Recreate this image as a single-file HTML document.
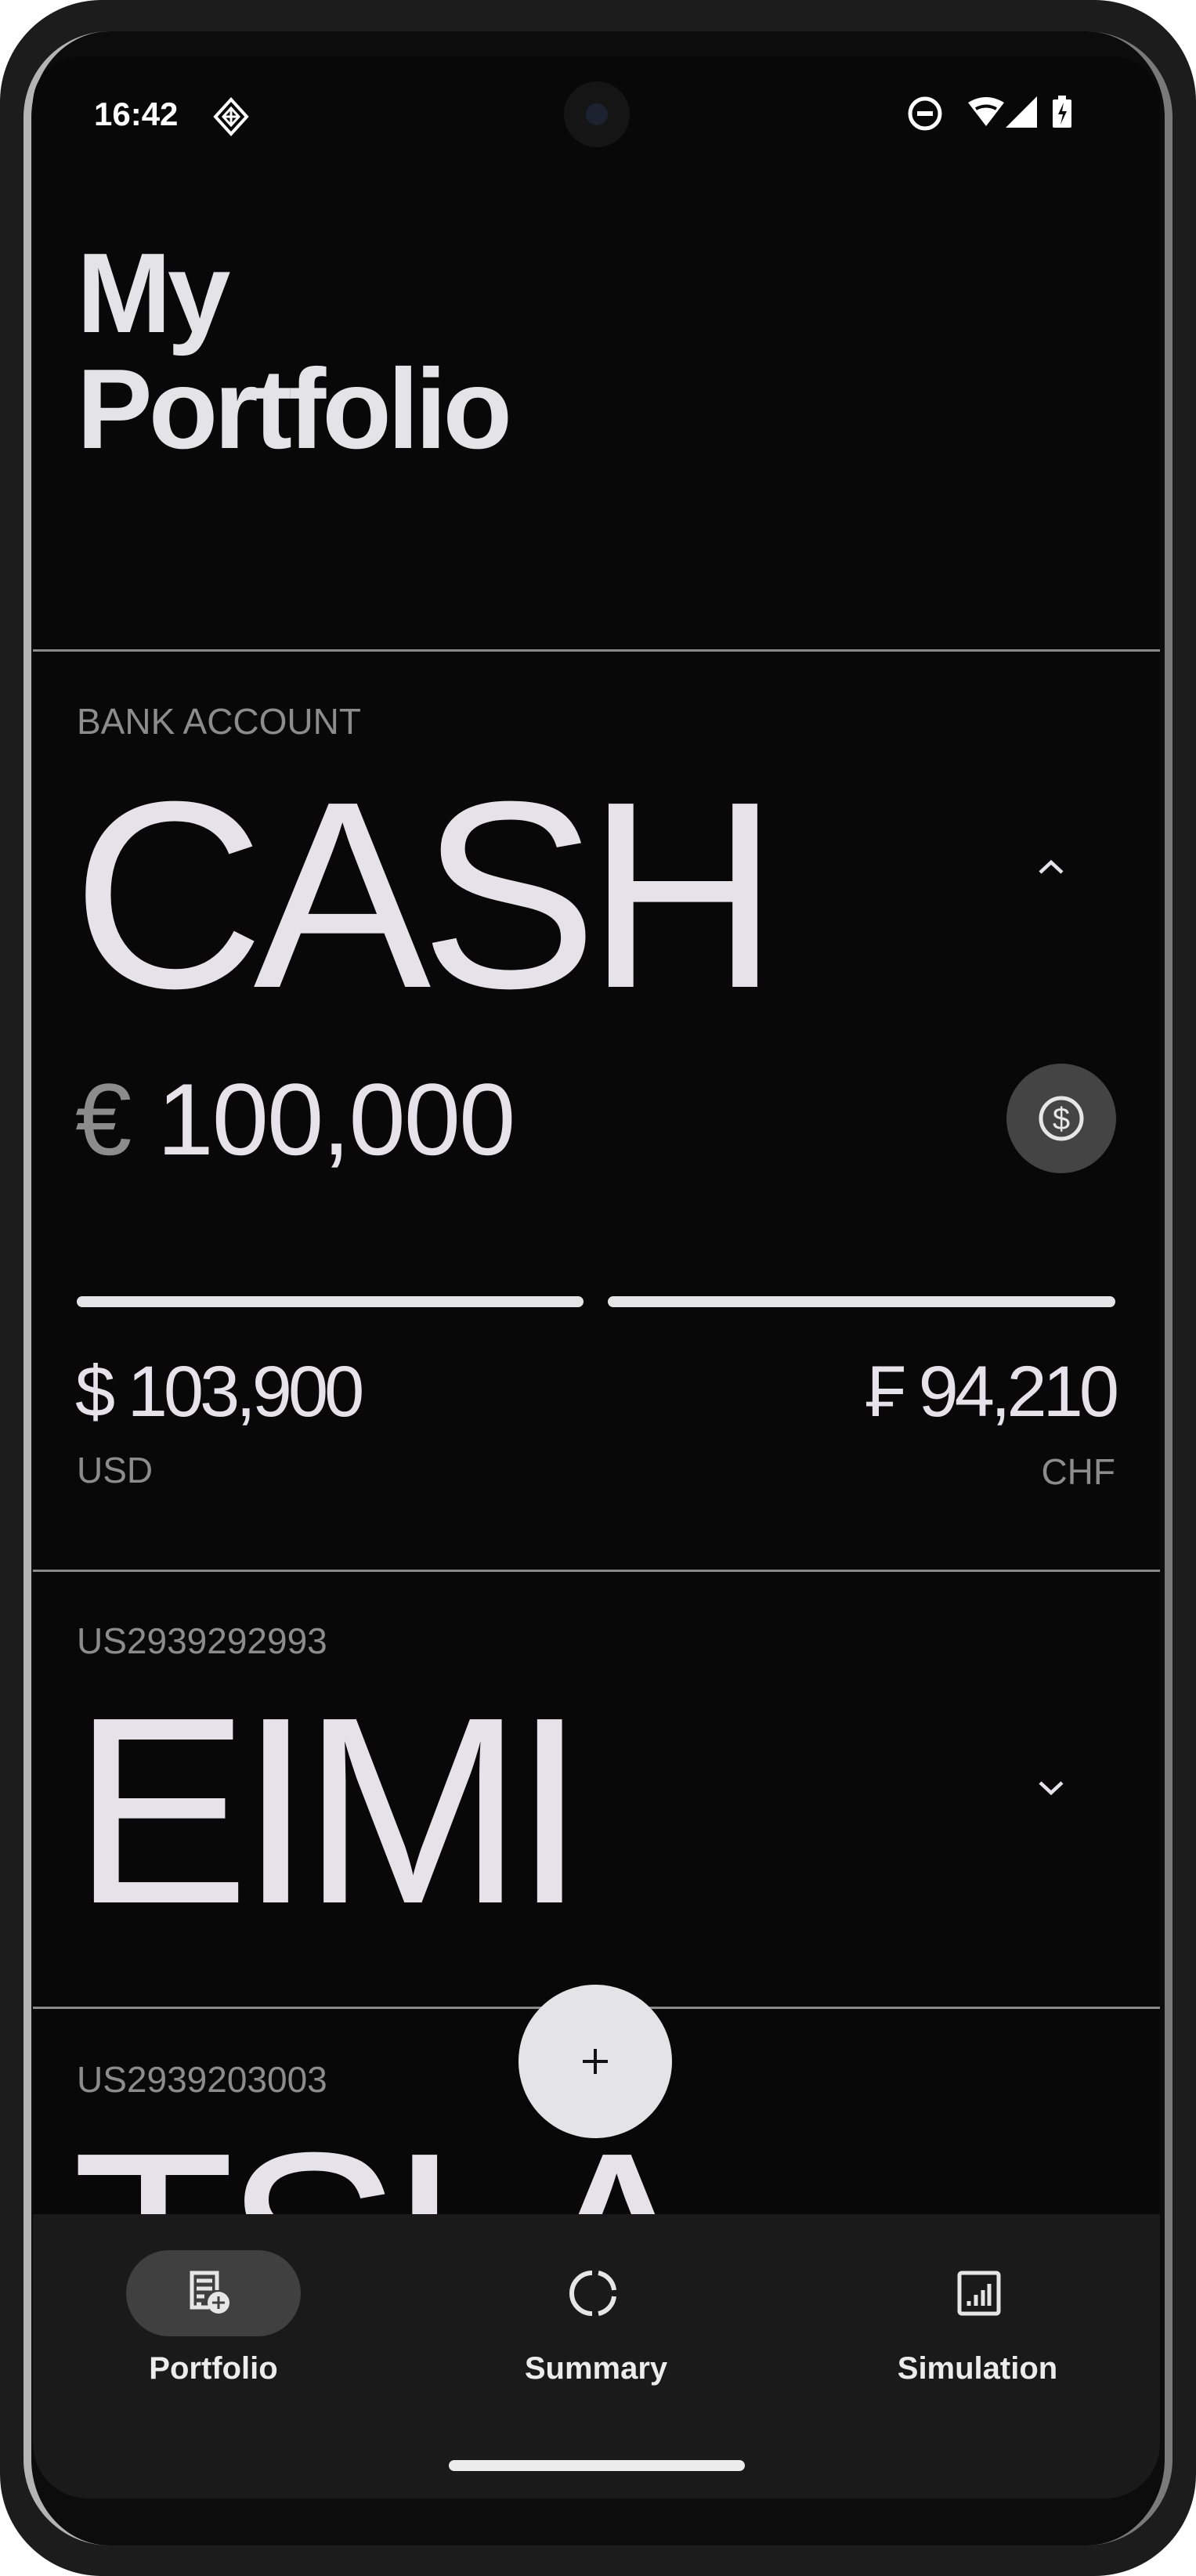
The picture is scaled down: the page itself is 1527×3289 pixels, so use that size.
<!DOCTYPE html>
<html><head><meta charset="utf-8"><style>
*{margin:0;padding:0;box-sizing:border-box}
html,body{width:1527px;height:3289px;background:#fff;overflow:hidden;font-family:"Liberation Sans",sans-serif}
.phone{position:absolute;left:0;top:0;width:1527px;height:3289px;border-radius:130px;background:#1c1c1c;}
.bezel{position:absolute;left:30px;top:40px;width:1467px;height:3210px;border-radius:110px;background:#0c0c0c;border-left:10px solid #b4b4b4;border-right:10px solid #7a7a7a;}
.screen{position:absolute;left:42px;top:72px;width:1439px;height:3118px;background:#080808;border-radius:60px 60px 70px 70px;overflow:hidden;}
.abs{position:absolute}
.t{color:#e6e2ea}
.g{color:#8c8c8c}
.div{position:absolute;left:0;width:1439px;height:3px;background:#8a8a8a}
.big{font-size:340px;line-height:400px;letter-spacing:-14px}
</style></head><body>
<div class="phone"></div>
<div class="bezel"></div>
<div class="screen">
  <div class="abs" style="left:78px;top:50px;font-size:42px;color:#fff;font-weight:bold">16:42</div>
  <svg class="abs" style="left:228px;top:52px" width="50" height="50" viewBox="0 0 50 50"><path d="M25 3 L45 25 L25 47 L5 25 Z" fill="none" stroke="#fff" stroke-width="4"/><path d="M25 14 L35 25 L25 36 L15 25 Z M15 25 H35 M25 14 V36" fill="none" stroke="#fff" stroke-width="3"/></svg>
  <div class="abs" style="left:678px;top:32px;width:84px;height:84px;border-radius:50%;background:#151515"></div>
  <div class="abs" style="left:706px;top:60px;width:28px;height:28px;border-radius:50%;background:#1d2230"></div>
  <svg class="abs" style="left:1115px;top:45px" width="280" height="60" viewBox="0 0 280 60">
    <circle cx="24" cy="28" r="19" fill="none" stroke="#fff" stroke-width="5"/><rect x="14" y="25" width="20" height="6" fill="#fff"/>
    <path d="M79 14 Q102 0 125 14 L102 44 Z" fill="#fff"/><path d="M89 22 Q102 15 115 22" stroke="#080808" stroke-width="4" fill="none"/>
    <path d="M167 6 L167 46 L127 46 Z" fill="#fff"/>
    <rect x="187" y="10" width="24" height="36" rx="2" fill="#fff"/><rect x="194" y="5" width="10" height="6" fill="#fff"/><path d="M201 14 L194 29 H200 L197 42 L205 25 H199 Z" fill="#080808"/>
  </svg>
  <div class="abs" style="left:56px;top:228px;font-size:145px;font-weight:bold;color:#e4e4e8;line-height:148px;letter-spacing:-5px">My<br>Portfolio</div>
  <div class="div" style="top:757px"></div>
  <div class="abs g" style="left:56px;top:822px;font-size:46px">BANK ACCOUNT</div>
  <div class="abs t big" style="left:50px;top:871px">CASH</div>
  <svg class="abs" style="left:1280px;top:1020px" width="40" height="30" viewBox="0 0 40 30"><path d="M6 22 L20 9 L34 22" fill="none" stroke="#e6e2ea" stroke-width="4.5"/></svg>
  <div class="abs" style="left:54px;top:1282px;font-size:130px;line-height:150px;letter-spacing:-2px"><span class="g">€</span> <span class="t">100,000</span></div>
  <div class="abs" style="left:1243px;top:1286px;width:140px;height:140px;border-radius:50%;background:#444"></div>
  <svg class="abs" style="left:1283px;top:1326px" width="60" height="60" viewBox="0 0 60 60"><circle cx="30" cy="30" r="26" fill="none" stroke="#e6e6e6" stroke-width="5"/><text x="30" y="44" text-anchor="middle" font-family="Liberation Sans" font-size="40" fill="#e6e6e6">$</text></svg>
  <div class="abs" style="left:56px;top:1583px;width:647px;height:14px;border-radius:7px;background:#e4e4e6"></div>
  <div class="abs" style="left:734px;top:1583px;width:648px;height:14px;border-radius:7px;background:#e4e4e6"></div>
  <div class="abs t" style="left:54px;top:1650px;font-size:92px;line-height:110px;letter-spacing:-5px">$ 103,900</div>
  <div class="abs t" style="right:57px;top:1650px;font-size:92px;line-height:110px;letter-spacing:-5px">₣ 94,210</div>
  <div class="abs g" style="left:56px;top:1778px;font-size:46px">USD</div>
  <div class="abs g" style="right:57px;top:1780px;font-size:46px">CHF</div>
  <div class="div" style="top:1932px"></div>
  <div class="abs g" style="left:56px;top:1996px;font-size:46px">US2939292993</div>
  <div class="abs t big" style="left:50px;top:2040px">EIMI</div>
  <svg class="abs" style="left:1280px;top:2196px" width="40" height="30" viewBox="0 0 40 30"><path d="M6 8 L20 21 L34 8" fill="none" stroke="#e6e2ea" stroke-width="4.5"/></svg>
  <div class="div" style="top:2490px"></div>
  <div class="abs g" style="left:56px;top:2556px;font-size:46px">US2939203003</div>
  <div class="abs t big" style="left:50px;top:2596px">TSLA</div>
  <div class="abs" style="left:0;top:2755px;width:1439px;height:400px;background:#1a1a1a"></div>
  <div class="abs" style="left:119px;top:2801px;width:223px;height:110px;border-radius:55px;background:#404040"></div>
  <svg class="abs" style="left:195px;top:2822px" width="70" height="70" viewBox="0 0 70 70"><path d="M30 52 H8 V8 H40 V30" fill="none" stroke="#e6e6e6" stroke-width="5"/><path d="M14 18 H34 M14 28 H34 M14 38 H24 M14 48 H20" stroke="#e6e6e6" stroke-width="5"/><circle cx="42" cy="46" r="14" fill="#e6e6e6"/><path d="M42 38 V54 M34 46 H50" stroke="#404040" stroke-width="3"/></svg>
  <svg class="abs" style="left:678px;top:2822px" width="80" height="70" viewBox="0 0 80 70"><path d="M36 8 A25 25 0 0 0 36 60 M44 8 A25 25 0 0 1 64 30 M64 38 A25 25 0 0 1 44 60" fill="none" stroke="#e6e6e6" stroke-width="6"/></svg>
  <svg class="abs" style="left:1173px;top:2822px" width="70" height="70" viewBox="0 0 70 70"><rect x="10" y="8" width="50" height="52" rx="3" fill="none" stroke="#e6e6e6" stroke-width="5"/><path d="M22 44 V50 M31 36 V50 M40 30 V50 M48 22 V50" stroke="#e6e6e6" stroke-width="5"/></svg>
  <div class="abs" style="left:0;width:461px;top:2930px;text-align:center;font-size:40px;font-weight:bold;color:#ececec">Portfolio</div>
  <div class="abs" style="left:474px;width:490px;top:2930px;text-align:center;font-size:40px;font-weight:bold;color:#ececec">Summary</div>
  <div class="abs" style="left:961px;width:490px;top:2930px;text-align:center;font-size:40px;font-weight:bold;color:#ececec">Simulation</div>
  <div class="abs" style="left:531px;top:3069px;width:378px;height:14px;border-radius:7px;background:#ececec"></div>
  <div class="abs" style="left:620px;top:2462px;width:196px;height:196px;border-radius:50%;background:#e4e4e6"></div>
  <svg class="abs" style="left:698px;top:2540px" width="40" height="40" viewBox="0 0 40 40"><path d="M20 4 V36 M4 20 H36" stroke="#111" stroke-width="4"/></svg>
</div>
</body></html>
